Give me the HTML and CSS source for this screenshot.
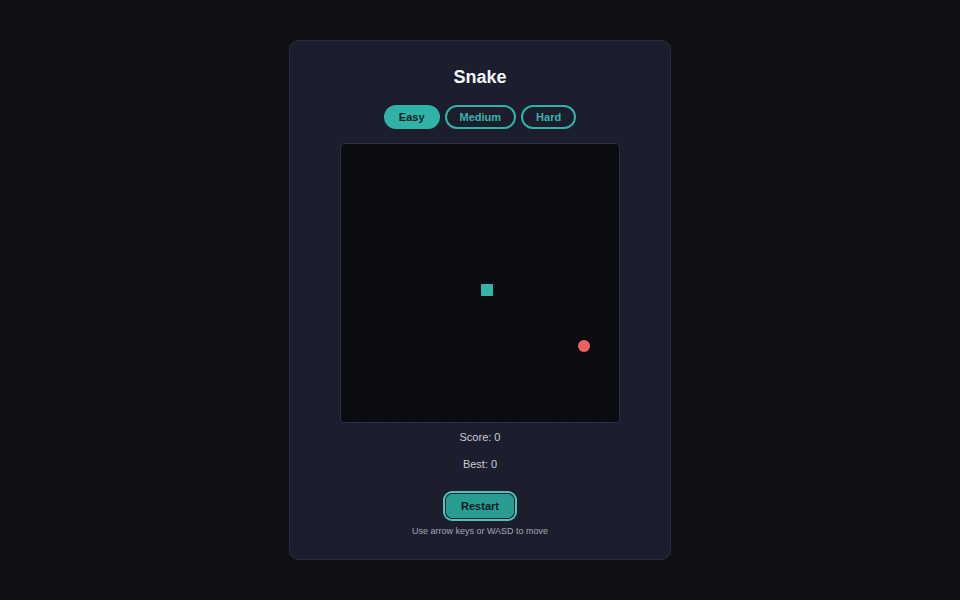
FILE: index.html
```html
<!DOCTYPE html>
<html lang="en">
<head>
<meta charset="utf-8">
<title>Snake</title>
<link rel="stylesheet" href="styles.css">
</head>
<body>
<main class="card">
  <h1 class="title">Snake</h1>
  <div class="modes">
    <button class="mode active">Easy</button>
    <button class="mode">Medium</button>
    <button class="mode">Hard</button>
  </div>
  <div class="board">
    <div class="snake" style="left:140px;top:140px"></div>
    <div class="food" style="left:237px;top:196px"></div>
  </div>
  <p class="stat score">Score: 0</p>
  <p class="stat best">Best: 0</p>
  <button class="restart">Restart</button>
  <p class="hint">Use arrow keys or WASD to move</p>
</main>
</body>
</html>
```
FILE: styles.css
```css
html, body {
  margin: 0;
  padding: 0;
}
body {
  background: #0f1016;
  height: 100vh;
  display: flex;
  align-items: center;
  justify-content: center;
  font-family: "Liberation Sans", Arial, sans-serif;
  color: #e6e8ee;
}
.card {
  box-sizing: border-box;
  width: 382px;
  background: #1c1e2d;
  border: 1px solid #2a2d3d;
  border-radius: 10px;
  padding: 25px 0 22px;
  display: flex;
  flex-direction: column;
  align-items: center;
}
.title {
  margin: 0;
  font-size: 18px;
  line-height: 22px;
  font-weight: 700;
  color: #f4f5f8;
}
.modes {
  margin-top: 17px;
  display: flex;
  gap: 5px;
}
.mode {
  font-family: inherit;
  font-size: 11px;
  line-height: 14px;
  font-weight: 700;
  padding: 3px 13px;
  border: 2px solid #2fb3a6;
  border-radius: 12px;
  background: transparent;
  color: #36b5aa;
  cursor: pointer;
}
.mode.active {
  background: #2fb3a6;
  color: #102024;
}
.board {
  position: relative;
  margin-top: 14px;
  box-sizing: border-box;
  width: 280px;
  height: 280px;
  background-color: #0a0c12;
  background-image:
    linear-gradient(to right, rgba(255,255,255,0.007) 1px, transparent 1px),
    linear-gradient(to bottom, rgba(255,255,255,0.007) 1px, transparent 1px);
  background-size: 13.9px 13.9px;
  border: 1px solid #2c3040;
  border-radius: 4px;
}
.snake {
  position: absolute;
  width: 12px;
  height: 12px;
  background: #35b3a7;
  border-radius: 1px;
}
.food {
  position: absolute;
  width: 12px;
  height: 12px;
  background: #f0625f;
  border-radius: 50%;
}
.stat {
  margin: 0;
  font-size: 11px;
  line-height: 14px;
  color: #c9ccd6;
}
.score {
  margin-top: 7px;
}
.best {
  margin-top: 13px;
}
.restart {
  margin-top: 23px;
  box-sizing: border-box;
  width: 68px;
  height: 24px;
  font-family: inherit;
  font-size: 11px;
  font-weight: 700;
  color: #0f1c1e;
  background: #2a9d92;
  border: 1px solid #2a9d92;
  border-radius: 6px;
  outline: 2px solid #4fc3b8;
  outline-offset: 1px;
  padding: 0;
  cursor: pointer;
}
.hint {
  margin: 8px 0 0;
  font-size: 9px;
  line-height: 11px;
  color: #a3a7b3;
}
```
